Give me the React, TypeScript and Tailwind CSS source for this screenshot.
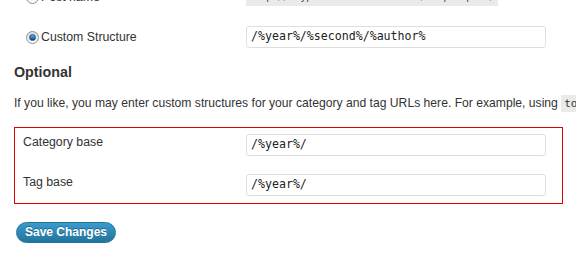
import React from "react";

const Radio: React.FC<{ checked?: boolean }> = ({ checked }) => (
  <span className="relative w-[13px] h-[13px] rounded-full border border-[#8e8f8f] bg-gradient-to-b from-[#dcdcdc] to-[#ffffff] flex items-center justify-center shrink-0">
    {checked && (
      <span className="w-[7px] h-[7px] rounded-full bg-gradient-to-b from-[#5fb5ee] to-[#0f4a86] border border-[#1c4f80]" />
    )}
  </span>
);

const TextField: React.FC<{ value: string }> = ({ value }) => (
  <div className="w-[300px] h-[22px] border border-[#dfdfdf] rounded-[3px] bg-white px-[4px] flex items-center font-['DejaVu_Sans_Mono',monospace] text-[11.6px] text-[#222]">
    {value}
  </div>
);

export default function App() {
  return (
    <div className="w-[576px] h-[262px] overflow-hidden bg-white font-['Liberation_Sans',Arial,sans-serif] text-[12.3px] text-[#333]">
      <div className="-mt-[23px] pl-[14px]">
        {/* Permalink choices */}
        <div className="h-[40px] flex items-center">
          <label className="w-[232px] pl-[12px] flex items-center gap-[2px]">
            <Radio />
            <span>Post name</span>
          </label>
          <code className="bg-[#eaeaea] px-[3px] py-[3px] font-['DejaVu_Sans_Mono',monospace] text-[9.5px] leading-[12px]">
            http://skyprimecreationkit.com/sample-post/
          </code>
        </div>
        <div className="h-[40px] flex items-center">
          <label className="w-[232px] pl-[12px] flex items-center gap-[2px]">
            <Radio checked />
            <span>Custom Structure</span>
          </label>
          <TextField value="/%year%/%second%/%author%" />
        </div>

        <h3 className="mt-[5px] text-[14.3px] leading-[20px] font-bold text-[#333]">Optional</h3>
        <p className="mt-[13px] text-[12.15px] leading-[16px] whitespace-nowrap">
          If you like, you may enter custom structures for your category and tag URLs here. For example, using{" "}
          <code className="bg-[#eaeaea] px-[3px] py-[2px] font-['DejaVu_Sans_Mono',monospace] text-[11px]">topics</code>
        </p>

        {/* Category / tag bases */}
        <div className="mt-[15px] w-[549px] border border-[#e00000] pt-[6px] pb-[7px] pl-[8px] flex flex-col gap-[18px]">
          <div className="flex items-start">
            <span className="w-[223px] leading-[16px]">Category base</span>
            <TextField value="/%year%/" />
          </div>
          <div className="flex items-start">
            <span className="w-[223px] leading-[16px]">Tag base</span>
            <TextField value="/%year%/" />
          </div>
        </div>

        <button className="mt-[18px] ml-[2px] h-[21px] px-[8px] rounded-full border border-[#21759b] bg-gradient-to-b from-[#3a9ad0] to-[#21759b] text-white font-bold text-[12px] leading-[19px] [text-shadow:0_-1px_0_rgba(0,0,0,0.3)]">
          Save Changes
        </button>
      </div>
    </div>
  );
}
